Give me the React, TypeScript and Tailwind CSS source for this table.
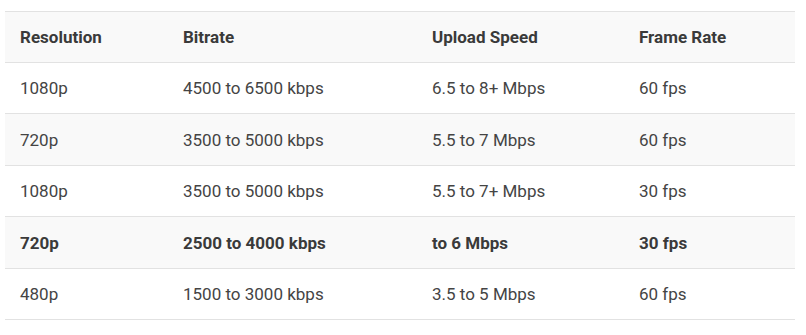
const ROWS = [
  { res: "1080p", bitrate: "4500 to 6500 kbps", upload: "6.5 to 8+ Mbps", fps: "60 fps" },
  { res: "720p", bitrate: "3500 to 5000 kbps", upload: "5.5 to 7 Mbps", fps: "60 fps" },
  { res: "1080p", bitrate: "3500 to 5000 kbps", upload: "5.5 to 7+ Mbps", fps: "30 fps" },
  { res: "720p", bitrate: "2500 to 4000 kbps", upload: "to 6 Mbps", fps: "30 fps", strong: true },
  { res: "480p", bitrate: "1500 to 3000 kbps", upload: "3.5 to 5 Mbps", fps: "60 fps" },
];

export default function App() {
  return (
    <div className="min-h-screen bg-white pt-[11px] pl-[5px] font-['Roboto',sans-serif]">
      <table className="w-[790px] table-fixed border-collapse text-left text-[17px] text-[#444]">
        <colgroup>
          <col className="w-[163px]" />
          <col className="w-[249px]" />
          <col className="w-[207px]" />
          <col />
        </colgroup>
        <thead>
          <tr className="border-y border-[#e2e2e2] bg-[#f9f9f9]">
            <th className="h-[51px] px-[15px] pt-[2px] font-bold text-[#3a3a3a]">Resolution</th>
            <th className="px-[15px] pt-[2px] font-bold text-[#3a3a3a]">Bitrate</th>
            <th className="px-[15px] pt-[2px] font-bold text-[#3a3a3a]">Upload Speed</th>
            <th className="px-[15px] pt-[2px] font-bold text-[#3a3a3a]">Frame Rate</th>
          </tr>
        </thead>
        <tbody>
          {ROWS.map((r, i) => (
            <tr
              key={i}
              className={`border-b border-[#e2e2e2] ${i % 2 === 1 ? "bg-[#f9f9f9]" : "bg-white"} ${
                r.strong ? "font-bold text-[#3a3a3a]" : ""
              }`}
            >
              <td className="h-[51.4px] px-[15px] pt-[2px]">{r.res}</td>
              <td className="px-[15px] pt-[2px]">{r.bitrate}</td>
              <td className="px-[15px] pt-[2px]">{r.upload}</td>
              <td className="px-[15px] pt-[2px]">{r.fps}</td>
            </tr>
          ))}
        </tbody>
      </table>
    </div>
  );
}
